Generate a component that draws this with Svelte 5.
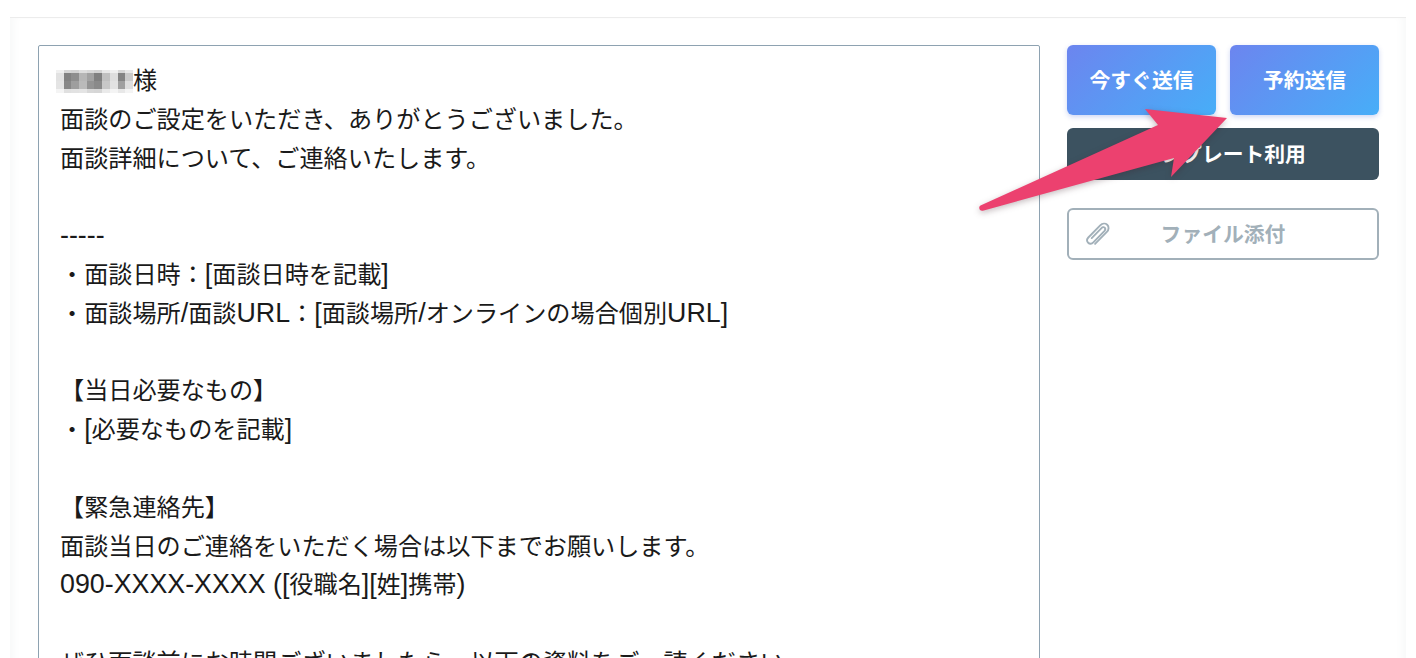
<script lang="ts">
  // mosaic over the recipient name, one row of greys per line
  const mosaic = [
    ['#f0f0f0', '#d6d6d6', '#d2d2d2', '#dedede', '#d8d8d8', '#d2d2d2', '#e8e8e8', '#f0f0f0', '#d6d6d6', '#e8e8e8'],
    ['#e2e2e2', '#828282', '#8e8e8e', '#b6b6b6', '#a2a2a2', '#808080', '#c0c0c0', '#dedede', '#848484', '#cacaca'],
    ['#e4e4e4', '#888888', '#9e9e9e', '#bababa', '#949494', '#8a8a8a', '#c8c8c8', '#e2e2e2', '#a0a0a0', '#dedede'],
    ['#f4f4f4', '#e0e0e0', '#e2e2e2', '#e4e4e4', '#d8d8d8', '#d6d6d6', '#eaeaea', '#f4f4f4', '#e8e8e8', '#f4f4f4']
  ];

  const lines = [
    '面談のご設定をいただき、ありがとうございました。',
    '面談詳細について、ご連絡いたします。',
    '',
    '-----',
    '・面談日時：[面談日時を記載]',
    '・面談場所/面談URL：[面談場所/オンラインの場合個別URL]',
    '',
    '【当日必要なもの】',
    '・[必要なものを記載]',
    '',
    '【緊急連絡先】',
    '面談当日のご連絡をいただく場合は以下までお願いします。',
    '090-XXXX-XXXX ([役職名][姓]携帯)',
    '',
    'ぜひ面談前にお時間ございましたら、以下の資料をご一読ください。'
  ];

  // latin runs are set larger than the kana and kanji
  const runs = (line: string) => line.split(/([\x20-\x7e]+)/).filter(Boolean);
  const isLatin = (run: string) => /^[\x20-\x7e]/.test(run);
</script>

<div class="page">
  <main class="panel">
    <div class="message">
      <div class="line first">
        <span class="mosaic" aria-hidden="true">
          {#each mosaic as row}
            {#each row as shade}
              <i style="background: {shade}"></i>
            {/each}
          {/each}
        </span>
        <span>様</span>
      </div>
      {#each lines as line}
        <div class="line">
          {#each runs(line) as run}
            <span class:latin={isLatin(run)}>{run}</span>
          {/each}
        </div>
      {/each}
    </div>

    <aside class="actions">
      <div class="send-row">
        <button class="send">今すぐ送信</button>
        <button class="send">予約送信</button>
      </div>
      <button class="template">テンプレート利用</button>
      <button class="attach">
        <svg viewBox="0 0 24 24" width="28" height="28" fill="none" stroke="currentColor" stroke-width="1.6" stroke-linecap="round" stroke-linejoin="round" aria-hidden="true">
          <path d="M9.5 20.5 19.6 10.2c1.9-2 1.9-4.6.3-6.1-1.6-1.5-4.1-1.4-6 .5L3.7 15c-1.3 1.4-1.3 3.3-.1 4.5 1.2 1.2 3 1.1 4.4-.3L17.6 9.3c.8-.9.8-2 .1-2.7-.7-.7-1.8-.6-2.7.3L6.6 15.5" />
        </svg>
        <span>ファイル添付</span>
      </button>
    </aside>
  </main>

  <svg class="arrow" width="270" height="120" viewBox="970 100 270 120" aria-hidden="true">
    <path d="M1227 118 1145 109 1158 125 980.5 205.5c-2.6 1.4-.8 6 2.4 5.2L1174 158 1171 177Z" />
  </svg>
</div>

<style>
  :global(body) {
    margin: 0;
    background: #fff;
    overflow: hidden;
  }

  .page {
    position: relative;
    height: 658px;
    padding: 17px 10px 0;
    box-sizing: border-box;
    overflow: hidden;
    font-family: 'Liberation Sans', 'Noto Sans CJK JP', sans-serif;
  }

  .panel {
    display: flex;
    gap: 27px;
    height: 700px;
    padding: 27px 27px 0 28px;
    box-sizing: border-box;
    background: #fff;
    border-top: 1px solid #ececec;
    box-shadow: inset 8px 0 8px -4px #f8f9f9, inset -8px 0 8px -4px #f8f9f9;
  }

  .message {
    width: 1002px;
    height: 660px;
    flex-shrink: 0;
    box-sizing: border-box;
    padding: 16px 21px;
    border: 1px solid #8ea2b1;
    border-radius: 2px;
    color: #1a1a1a;
    font-size: 24.15px;
    line-height: 38.8px;
  }

  .line {
    height: 38.8px;
    white-space: nowrap;
  }

  .first {
    display: flex;
    align-items: center;
  }

  .latin {
    font-size: 26.8px;
    line-height: 0;
  }

  .mosaic {
    display: inline-grid;
    grid-template-columns: repeat(10, 7.7px);
    grid-template-rows: 3px 8px 8px 4px;
    margin-left: -4px;
    filter: blur(0.5px);
  }

  .actions {
    display: flex;
    flex-direction: column;
    width: 312px;
  }

  .send-row {
    display: flex;
    gap: 14px;
    margin-bottom: 13px;
  }

  button {
    font-family: inherit;
    font-weight: 700;
    font-size: 20.8px;
    border: none;
    padding: 0 0 2px;
    border-radius: 6px;
  }

  .send {
    flex: 1;
    height: 70px;
    color: #fff;
    background: linear-gradient(135deg, #6c85ef 0%, #47aef8 100%);
    box-shadow: 0 2px 5px rgba(90, 120, 220, 0.3);
  }

  .template {
    height: 52px;
    margin-bottom: 28px;
    color: #fff;
    background: #3c5260;
  }

  .attach {
    position: relative;
    display: flex;
    align-items: center;
    justify-content: center;
    height: 52px;
    box-sizing: border-box;
    color: #a2b0b9;
    background: #fff;
    border: 2px solid #a2b0b9;
  }

  .attach svg {
    position: absolute;
    left: 15px;
    top: 10px;
  }

  .arrow {
    position: absolute;
    left: 970px;
    top: 100px;
    fill: #ec416f;
    filter: drop-shadow(0 2px 3px rgba(60, 30, 40, 0.3));
  }
</style>
